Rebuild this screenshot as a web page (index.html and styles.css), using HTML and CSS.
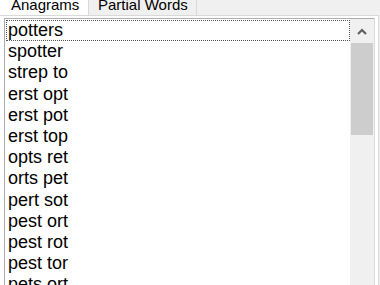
FILE: index.html
```html
<!DOCTYPE html>
<html lang="en">
<head>
    <meta charset="UTF-8">
    <title>Anagrams</title>
    <link rel="stylesheet" href="styles.css">
</head>
<body>
    <div class="tabs">
        <div class="tab tab-active">Anagrams</div>
        <div class="tab">Partial Words</div>
    </div>

    <div class="panel">
        <div class="listbox">
            <ul class="items">
                <li class="item item-focus">potters</li>
                <li class="item">spotter</li>
                <li class="item">strep to</li>
                <li class="item">erst opt</li>
                <li class="item">erst pot</li>
                <li class="item">erst top</li>
                <li class="item">opts ret</li>
                <li class="item">orts pet</li>
                <li class="item">pert sot</li>
                <li class="item">pest ort</li>
                <li class="item">pest rot</li>
                <li class="item">pest tor</li>
                <li class="item">pets ort</li>
            </ul>
            <div class="scrollbar">
                <div class="arrow">
                    <svg width="10" height="7" viewBox="0 0 10 7">
                        <path d="M1 6 L5 2 L9 6" fill="none" stroke="#606060" stroke-width="2.2"/>
                    </svg>
                </div>
                <div class="thumb"></div>
            </div>
        </div>
    </div>
</body>
</html>
```

FILE: styles.css
```css
body {
    margin: 0;
    width: 380px;
    height: 285px;
    background: #f0f0f0;
    font-family: 'Liberation Sans', Arial, sans-serif;
    overflow: hidden;
}

.tabs {
    display: flex;
    height: 15px;
    align-items: flex-end;
}

.tab {
    height: 15px;
    font-size: 15px;
    line-height: normal;
    color: #000;
    box-sizing: border-box;
    display: flex;
    align-items: flex-end;
    overflow: hidden;
    white-space: nowrap;
    padding-bottom: 2px;
}

.tab-active {
    width: 89px;
    background: #fff;
    border-right: 1px solid #d9d9d9;
    padding-left: 11px;
}

.tab:not(.tab-active) {
    width: 108px;
    background: #f0f0f0;
    border-right: 1px solid #d9d9d9;
    padding-left: 9px;
}

.panel {
    height: 270px;
    background: #fff;
    border-top: 1px solid #d9d9d9;
    border-right: 1px solid #d9d9d9;
    width: 379px;
    box-sizing: border-box;
    padding: 2px 0 0 4px;
}

.listbox {
    display: flex;
    width: 371px;
    height: 290px;
    border: 1px solid #adadad;
    border-right-color: #dcdcdc;
    box-sizing: border-box;
    background: #fff;
}

.items {
    list-style: none;
    margin: 0;
    padding: 1px 0 0 1px;
    flex: 1;
}

.item {
    height: 21.2px;
    line-height: 21px;
    font-size: 18px;
    padding-left: 2px;
    color: #000;
    box-sizing: border-box;
}

.item-focus {
    outline: 1px dotted #555;
    outline-offset: -1px;
}

.scrollbar {
    width: 24px;
    background: #f0f0f0;
    display: flex;
    flex-direction: column;
}

.arrow {
    height: 24px;
    display: flex;
    justify-content: center;
    align-items: center;
}

.thumb {
    height: 92px;
    margin: 0 1px;
    background: #cdcdcd;
}
```
